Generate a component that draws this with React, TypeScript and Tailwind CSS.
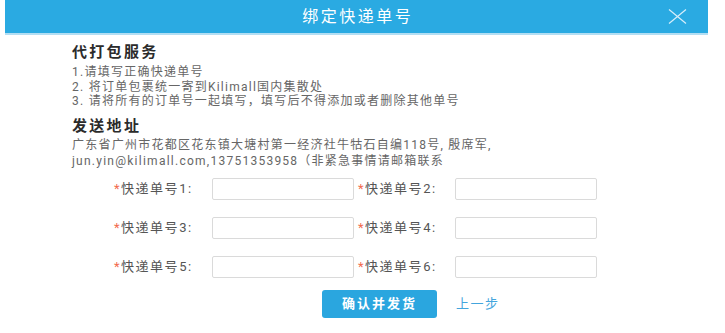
const font = { fontFamily: 'Roboto, "Noto Sans CJK SC", sans-serif' };

const Field = ({ n, first }: { n: number; first?: boolean }) => (
  <>
    <div className={`flex items-center text-[13px] tracking-[1.5px] text-[#555] ${first ? '' : 'pl-[4px]'}`}>
      <span className="text-[#f26b4c]">*</span>
      <span>快递单号{n}:</span>
    </div>
    <input className="h-[22px] w-full border border-[#dadada] rounded-[2px] bg-white outline-none" />
  </>
);

const App = () => {
  return (
    <div className="w-[725px] h-[333px] bg-white overflow-hidden" style={font}>
      <div className="ml-[5px] w-[703px]">
        {/* header */}
        <div className="relative h-[35px] bg-[#2aaae2] border-b-2 border-[#b3def3] flex items-center justify-center">
          <span className="text-white text-[16px] tracking-[2.5px] pl-[2.5px]">绑定快递单号</span>
          <svg className="absolute right-[21px] top-[9px]" width="19" height="15" viewBox="0 0 19 15">
            <path d="M1 0.5 L18 14.5 M18 0.5 L1 14.5" stroke="#d8eefa" strokeWidth="1.2" fill="none" />
          </svg>
        </div>

        <div className="pl-[67px]">
          <h3 className="mt-[7px] text-[15px] leading-[20px] font-bold tracking-[2.3px] text-[#2b2b2b]">代打包服务</h3>
          <div className="mt-[3px] text-[12px] leading-[14.5px] tracking-[1.25px] text-[#666]">
            <p>1.请填写正确快递单号</p>
            <p>2. 将订单包裹统一寄到Kilimall国内集散处</p>
            <p>3. 请将所有的订单号一起填写，填写后不得添加或者删除其他单号</p>
          </div>
          <h3 className="mt-[7.5px] text-[15px] leading-[20px] font-bold tracking-[2.3px] text-[#2b2b2b]">发送地址</h3>
          <div className="mt-[1px] text-[12px] leading-[16px] tracking-[1.25px] text-[#666]">
            <p>广东省广州市花都区花东镇大塘村第一经济社牛牯石自编118号, 殷席军,</p>
            <p>jun.yin@kilimall.com,13751353958（非紧急事情请邮箱联系</p>
          </div>
        </div>

        {/* form */}
        <div className="mt-[9px] ml-[109px] grid grid-cols-[98px_142px_101px_142px] gap-y-[17px]">
          <Field n={1} first />
          <Field n={2} />
          <Field n={3} first />
          <Field n={4} />
          <Field n={5} first />
          <Field n={6} />
        </div>

        <div className="mt-[12px] ml-[317px] flex items-center gap-[19px]">
          <button className="w-[115px] h-[28px] rounded-[3px] bg-[#2aa6df] text-white text-[13px] font-semibold tracking-[2px]">
            确认并发货
          </button>
          <span className="text-[13px] tracking-[1.5px] text-[#43a5dd]">上一步</span>
        </div>
      </div>
    </div>
  );
};

export default App;
